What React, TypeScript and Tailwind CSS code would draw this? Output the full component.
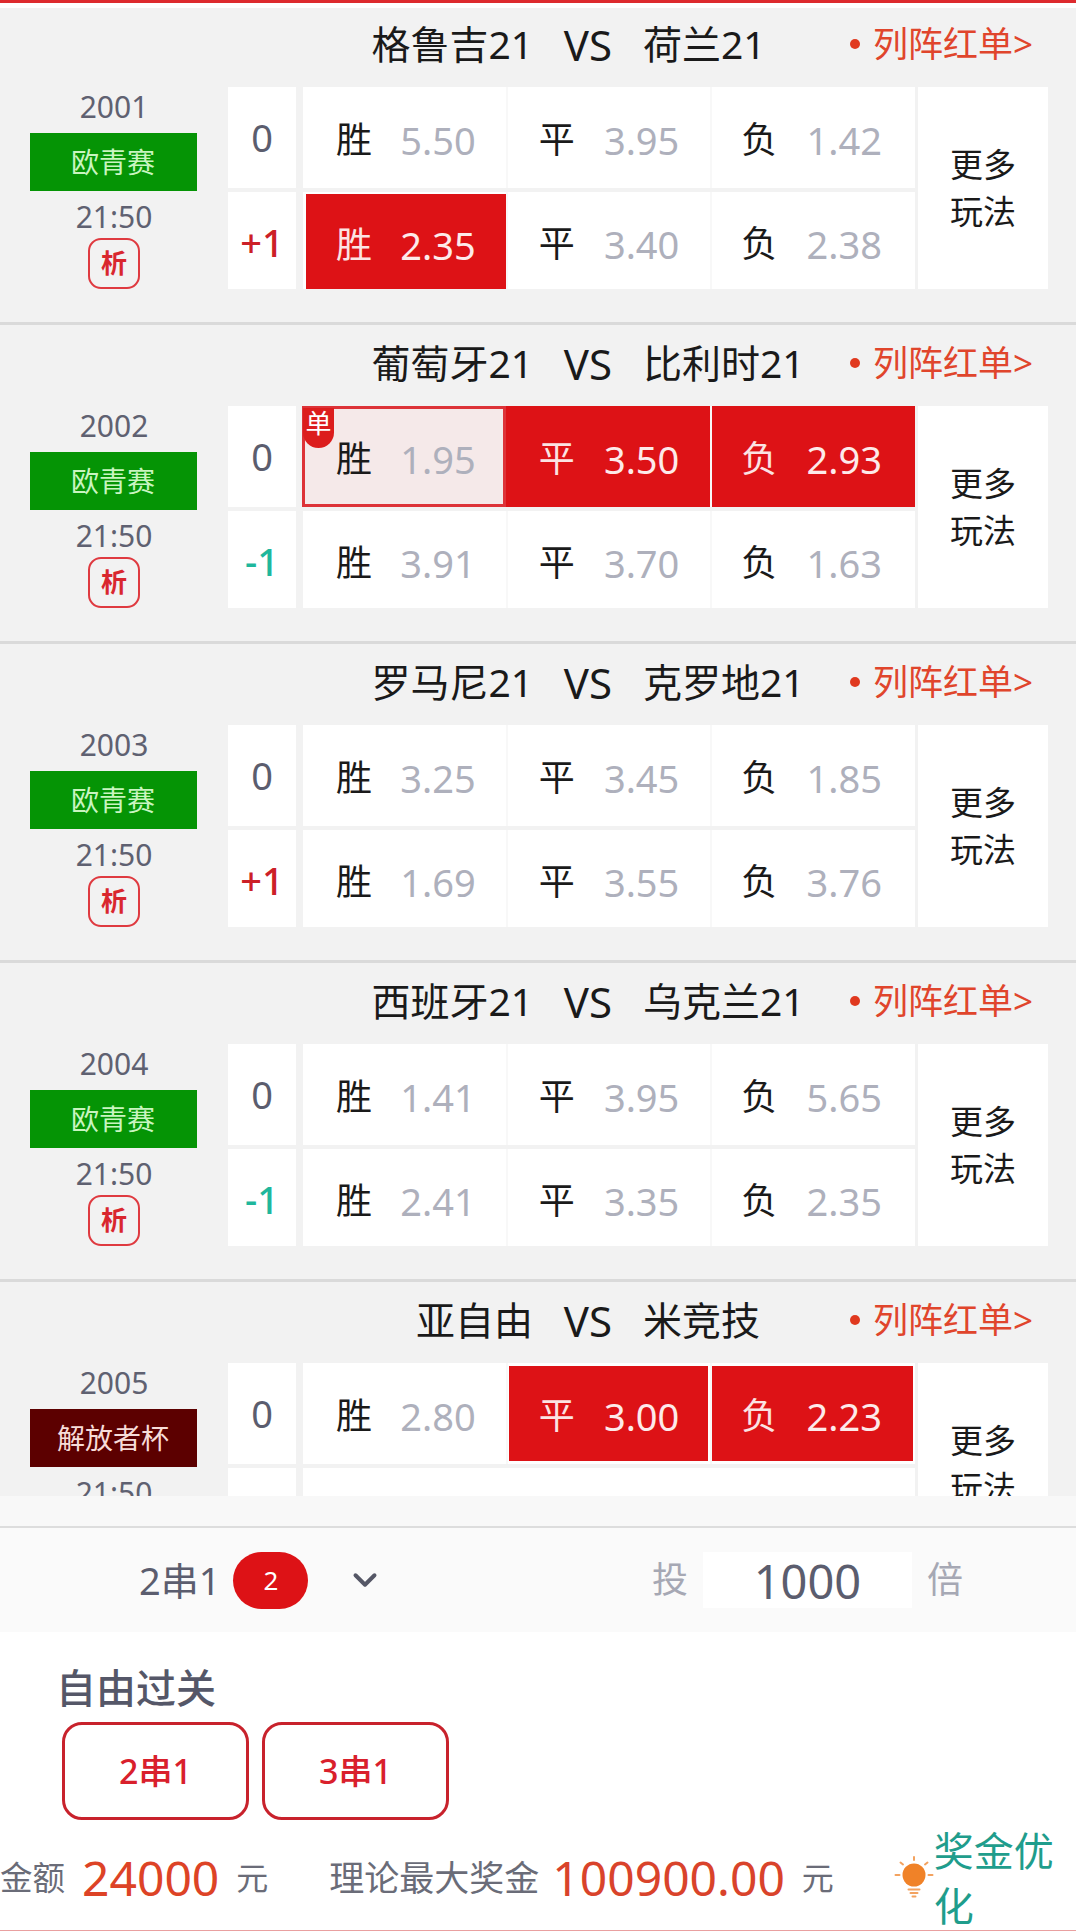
import { ChevronDown } from "lucide-react";
import { twMerge } from "tailwind-merge";

type Odd = { label: string; value: string; box?: string; single?: boolean };
type Line = { handicap: string; tone: string; odds: Odd[] };
type Match = {
  no: string;
  league: string;
  leagueBg: string;
  home: string;
  away: string;
  lines: Line[];
};

const RED = "bg-[#dd1216] text-white";
const COLUMN_PADDING = ["pl-[33px] pr-[30px]", "pl-[31px] pr-[31px]", "pl-[29px] pr-[33px]"];

const matches: Match[] = [
  {
    no: "2001",
    league: "欧青赛",
    leagueBg: "bg-[#059405] text-[#c9f5c0]",
    home: "格鲁吉21",
    away: "荷兰21",
    lines: [
      {
        handicap: "0",
        tone: "text-[#5b5d6e]",
        odds: [
          { label: "胜", value: "5.50" },
          { label: "平", value: "3.95" },
          { label: "负", value: "1.42" },
        ],
      },
      {
        handicap: "+1",
        tone: "text-[#cc2027] font-medium",
        odds: [
          { label: "胜", value: "2.35", box: `${RED} mt-[2px] ml-[3px] pl-[30px] pr-[30px]` },
          { label: "平", value: "3.40" },
          { label: "负", value: "2.38" },
        ],
      },
    ],
  },
  {
    no: "2002",
    league: "欧青赛",
    leagueBg: "bg-[#059405] text-[#c9f5c0]",
    home: "葡萄牙21",
    away: "比利时21",
    lines: [
      {
        handicap: "0",
        tone: "text-[#5b5d6e]",
        odds: [
          {
            label: "胜",
            value: "1.95",
            single: true,
            box: "bg-[#f5e9e9] border-[3px] border-[#dd3338] pl-[31px] pr-[27px] -ml-[1px]",
          },
          { label: "平", value: "3.50", box: `${RED} shadow-[-2px_0_0_#dd1216]` },
          { label: "负", value: "2.93", box: RED },
        ],
      },
      {
        handicap: "-1",
        tone: "text-[#1fb79c] font-medium",
        odds: [
          { label: "胜", value: "3.91" },
          { label: "平", value: "3.70" },
          { label: "负", value: "1.63" },
        ],
      },
    ],
  },
  {
    no: "2003",
    league: "欧青赛",
    leagueBg: "bg-[#059405] text-[#c9f5c0]",
    home: "罗马尼21",
    away: "克罗地21",
    lines: [
      {
        handicap: "0",
        tone: "text-[#5b5d6e]",
        odds: [
          { label: "胜", value: "3.25" },
          { label: "平", value: "3.45" },
          { label: "负", value: "1.85" },
        ],
      },
      {
        handicap: "+1",
        tone: "text-[#cc2027] font-medium",
        odds: [
          { label: "胜", value: "1.69" },
          { label: "平", value: "3.55" },
          { label: "负", value: "3.76" },
        ],
      },
    ],
  },
  {
    no: "2004",
    league: "欧青赛",
    leagueBg: "bg-[#059405] text-[#c9f5c0]",
    home: "西班牙21",
    away: "乌克兰21",
    lines: [
      {
        handicap: "0",
        tone: "text-[#5b5d6e]",
        odds: [
          { label: "胜", value: "1.41" },
          { label: "平", value: "3.95" },
          { label: "负", value: "5.65" },
        ],
      },
      {
        handicap: "-1",
        tone: "text-[#1fb79c] font-medium",
        odds: [
          { label: "胜", value: "2.41" },
          { label: "平", value: "3.35" },
          { label: "负", value: "2.35" },
        ],
      },
    ],
  },
  {
    no: "2005",
    league: "解放者杯",
    leagueBg: "bg-[#5c0000] text-[#f7dcd8]",
    home: "亚自由",
    away: "米竞技",
    lines: [
      {
        handicap: "0",
        tone: "text-[#5b5d6e]",
        odds: [
          { label: "胜", value: "2.80" },
          { label: "平", value: "3.00", box: `${RED} my-[3px] ml-[1px] mr-[2px] pl-[30px] pr-[29px]` },
          { label: "负", value: "2.23", box: `${RED} my-[3px] mr-[2px] pr-[31px]` },
        ],
      },
      { handicap: "", tone: "", odds: [] },
    ],
  },
];

function OddCell({ odd, column, lift }: { odd: Odd; column: number; lift: string }) {
  const picked = odd.box && odd.box.includes("text-white");
  return (
    <div className="flex-1 bg-white flex">
      <div className={twMerge("relative flex-1 flex items-center justify-between", COLUMN_PADDING[column], lift, odd.box)}>
        {odd.single && (
          <span className="absolute -left-[2px] -top-[1px] w-[31px] h-[40px] rounded-b-full bg-[#dc1d1d] text-white text-[26px] leading-[30px] text-center">
            单
          </span>
        )}
        <span className={picked ? "text-[#fbe3e3]" : "text-[#1a1a1a]"}>{odd.label}</span>
        <span className={`text-[38px] leading-[44px] ${picked ? "text-[#fdeaea]" : "text-[#aeb0bc]"}`}>{odd.value}</span>
      </div>
    </div>
  );
}

function MatchCard({ match }: { match: Match }) {
  return (
    <div className="h-[317px] mb-[2px] border-b-[3px] border-[#dadada]">
      {/* teams */}
      <div className="h-[79px] flex items-center pb-[7px]">
        <div className="w-[533px] text-right text-[39px] text-[#1a1a1a]">{match.home}</div>
        <div className="w-[110px] text-center text-[42px] text-[#1a1a1a]">VS</div>
        <div className="w-[207px] text-[39px] text-[#1a1a1a]">{match.away}</div>
        <div className="flex items-center text-[35px] text-[#e0452c]">
          <span className="w-[10px] h-[10px] rounded-full bg-[#e0391f] mr-[13px]" />
          列阵红单&gt;
        </div>
      </div>

      <div className="flex h-[202px]">
        {/* left info */}
        <div className="w-[228px] flex flex-col items-center text-[#5f6171] text-[30px]">
          <div className="h-[40px] leading-[40px]">{match.no}</div>
          <div className={`w-[167px] h-[58px] mt-[6px] -ml-[2px] flex items-center justify-center text-[28px] ${match.leagueBg}`}>
            {match.league}
          </div>
          <div className="h-[40px] leading-[40px] mt-[6px]">21:50</div>
          <div className="w-[52px] h-[51px] mt-[1px] border-2 border-[#df3a40] rounded-[13px] flex items-center justify-center text-[26px] text-[#d9272e] font-semibold">
            析
          </div>
        </div>

        {/* handicap column */}
        <div className="w-[68px] flex flex-col gap-[4px] text-[38px]">
          <div className={`h-[101px] bg-white flex items-center justify-center ${match.lines[0].tone}`}>
            {match.lines[0].handicap}
          </div>
          <div className={`flex-1 bg-white flex items-center justify-center pt-[4px] ${match.lines[1].tone}`}>
            {match.lines[1].handicap}
          </div>
        </div>

        {/* odds */}
        <div className="w-[612px] ml-[7px] flex flex-col gap-[4px] text-[36px]">
          <div className="h-[101px] flex gap-[2px] bg-[#f8f8f8]">
            {match.lines[0].odds.map((odd, i) => (
              <OddCell key={odd.label} odd={odd} column={i} lift="pt-[5px]" />
            ))}
          </div>
          <div className="flex-1 flex gap-[2px] bg-[#f8f8f8]">
            {match.lines[1].odds.length > 0 ? (
              match.lines[1].odds.map((odd, i) => <OddCell key={odd.label} odd={odd} column={i} lift="pt-[7px]" />)
            ) : (
              <div className="flex-1 bg-white" />
            )}
          </div>
        </div>

        {/* more */}
        <div className="w-[130px] ml-[3px] bg-white flex items-center justify-center text-center text-[33px] leading-[47px] text-[#1a1a1a]">
          更多
          <br />
          玩法
        </div>
      </div>
    </div>
  );
}

function Bulb() {
  return (
    <svg width="40" height="46" viewBox="0 0 40 46" className="shrink-0">
      <circle cx="20" cy="20" r="11.5" fill="#f08228" />
      <g stroke="#f3a25f" strokeWidth="2" strokeLinecap="round">
        <path d="M20 2v3" />
        <path d="M6.5 7.5l2.5 2" />
        <path d="M33.5 7.5l-2.5 2" />
        <path d="M1.5 20h4" />
        <path d="M34.5 20h4" />
        <path d="M14.5 34.5h11" />
        <path d="M16.5 38h7" />
        <path d="M18.5 41.5h3" />
      </g>
    </svg>
  );
}

export default function App() {
  return (
    <div className="w-[1076px] h-[1931px] overflow-hidden flex flex-col bg-white font-['Noto_Sans','Noto_Sans_CJK_SC',sans-serif]">
      <div className="h-[8px] shrink-0 border-t-[3px] border-[#dd2a2e] bg-white" />

      <div className="h-[1488px] shrink-0 overflow-hidden bg-[#f2f2f2]">
        {matches.map((match) => (
          <MatchCard key={match.no} match={match} />
        ))}
      </div>

      <div className="h-[32px] shrink-0 bg-[#f8f8f8] border-b-2 border-[#dddddd]" />

      <div className="h-[104px] shrink-0 bg-[#fafafa] flex items-center justify-between pl-[139px] pr-[113px]">
        <div className="flex items-center text-[38px] text-[#5b5d6e]">
          2串1
          <span className="w-[75px] h-[57px] ml-[13px] rounded-full bg-[#dd1216] text-white text-[26px] flex items-center justify-center">
            2
          </span>
          <ChevronDown size={38} strokeWidth={2.5} className="ml-[38px] text-[#555766]" />
        </div>
        <div className="flex items-center text-[36px] text-[#a6a8b4]">
          投
          <div className="w-[209px] h-[56px] mx-[15px] pt-[3px] bg-white text-[47px] text-[#5b5d6e] flex items-center justify-center">
            1000
          </div>
          倍
        </div>
      </div>

      <div className="flex-1 pt-[32px] border-b border-[#e9a0a0]">
        <div className="pl-[56px] text-[40px] leading-[47px] font-medium text-[#555768]">自由过关</div>
        <div className="flex gap-[13px] mt-[11px] ml-[62px]">
          <div className="w-[187px] h-[98px] border-[3px] border-[#c8222c] rounded-[20px] flex items-center justify-center text-[34px] font-medium text-[#d9202c]">
            2串1
          </div>
          <div className="w-[187px] h-[98px] border-[3px] border-[#c8222c] rounded-[20px] flex items-center justify-center text-[34px] font-medium text-[#d9202c]">
            3串1
          </div>
        </div>

        <div className="flex items-center h-[66px] mt-[25px] -ml-[65px] text-[#6a6c78] whitespace-nowrap">
          <span className="text-[32.5px]">投注金额</span>
          <span className="ml-[17px] text-[48px] text-[#dd4326]">24000</span>
          <span className="ml-[17px] text-[32px]">元</span>
          <span className="ml-[61px] text-[35px]">理论最大奖金</span>
          <span className="ml-[13px] text-[48px] text-[#d9432b]">100900.00</span>
          <span className="ml-[17px] text-[32px]">元</span>
          <div className="ml-[60px] flex items-center">
            <Bulb />
            <div className="w-[121px] text-[40px] leading-[55px] text-[#1f9d8c] whitespace-normal">
              奖金优化
            </div>
          </div>
        </div>
      </div>
    </div>
  );
}
